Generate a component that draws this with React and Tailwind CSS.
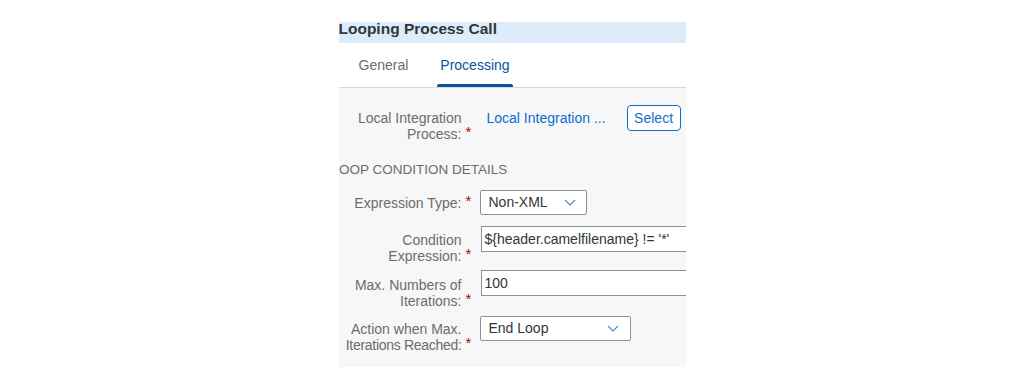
const Chevron = () => (
  <svg width="12" height="7" viewBox="0 0 12 7" fill="none">
    <path d="M1 1 L6 6 L11 1" stroke="#5b86be" strokeWidth="1.2" />
  </svg>
);

const Label = ({ children, pt }) => (
  <div className={`flex items-end shrink-0 w-[133px] ${pt}`}>
    <div className="w-[123px] text-right leading-4 text-[#6a6d70]">{children}</div>
    <span className="relative -top-[2px] pl-[4px] leading-4 text-[15px] text-[#bb0000]">*</span>
  </div>
);

export default function App() {
  return (
    <div className="w-[1024px] h-[390px] bg-white overflow-hidden font-['Liberation_Sans',Arial,sans-serif] text-[14px]">
      <div className="mx-auto w-[347px] mt-[22px] overflow-hidden">
        <div className="h-[21px] bg-[#dcecfb] overflow-hidden">
          <div className="-mt-[1px] text-[15.5px] font-bold leading-[16px] text-[#32363a] whitespace-nowrap">
            Looping Process Call
          </div>
        </div>
        <div className="h-[45px] bg-white border-b border-[#d9d9d9] flex items-stretch pl-[17px]">
          <div className="relative px-[3px] flex items-center text-[#6a6d70]">General</div>
          <div className="relative ml-[26px] px-[3px] flex items-center text-[#0854a0]">
            Processing
            <div className="absolute left-0 right-0 bottom-0 h-[3px] bg-[#0854a0] rounded-t-[2px]" />
          </div>
        </div>
        <div className="bg-[#f7f7f7] pt-[17px] pb-[14px]">
          <div className="h-[57px] flex items-start">
            <Label pt="pt-[5px]">Local Integration Process:</Label>
            <div className="ml-[8px] flex items-start whitespace-nowrap">
              <span className="pl-[7px] pt-[5px] leading-4 text-[#0a6ed1]">Local Integration ...</span>
              <button className="ml-[21px] h-[26px] w-[54px] border border-[#0a6ed1] rounded-[4px] text-[#0a6ed1] bg-white flex items-center justify-center">
                Select
              </button>
            </div>
          </div>
          <div className="h-[28px] -ml-[7px] text-[13.5px] leading-4 text-[#6a6d70] whitespace-nowrap">
            LOOP CONDITION DETAILS
          </div>
          <div className="h-[36px] flex items-start">
            <Label pt="pt-[5px]">Expression Type:</Label>
            <div className="ml-[8px] h-[25px] w-[107px] shrink-0 border border-[#89919a] bg-white rounded-[2px] flex items-center justify-between pl-[8px] pr-[10px] text-[#32363a]">
              <span>Non-XML</span>
              <Chevron />
            </div>
          </div>
          <div className="h-[44px] flex items-start">
            <Label pt="pt-[6px]">Condition Expression:</Label>
            <div className="ml-[9px] h-[26px] w-[230px] shrink-0 border border-[#89919a] bg-white flex items-center pl-[3px] text-[#32363a] whitespace-nowrap">
              {"${header.camelfilename} != '*'"}
            </div>
          </div>
          <div className="h-[46px] flex items-start">
            <Label pt="pt-[7px]">Max. Numbers of Iterations:</Label>
            <div className="ml-[9px] h-[26px] w-[230px] shrink-0 border border-[#89919a] bg-white flex items-center pl-[3px] text-[#32363a]">
              100
            </div>
          </div>
          <div className="flex items-start">
            <Label pt="pt-[5px]">
              Action when Max.
              <br />
              <span className="tracking-[-0.3px] whitespace-nowrap">Iterations Reached:</span>
            </Label>
            <div className="ml-[8px] h-[25px] w-[151px] shrink-0 border border-[#89919a] bg-white rounded-[2px] flex items-center justify-between pl-[8px] pr-[11px] text-[#32363a]">
              <span>End Loop</span>
              <Chevron />
            </div>
          </div>
        </div>
      </div>
    </div>
  );
}
